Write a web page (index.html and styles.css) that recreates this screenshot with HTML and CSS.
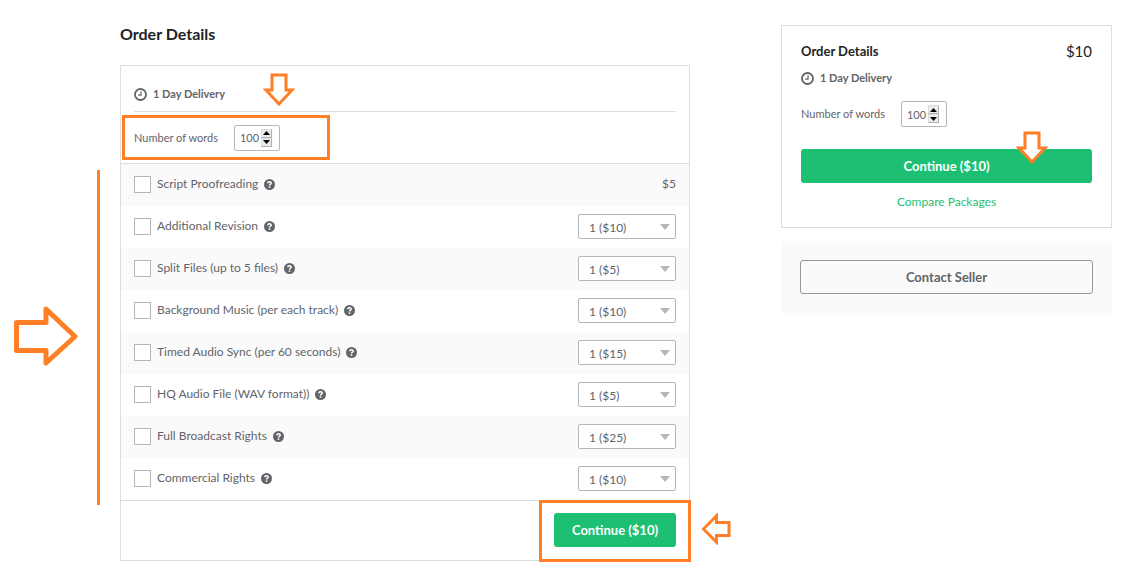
FILE: index.html
```html
<!DOCTYPE html>
<html lang="en">
<head>
  <meta charset="UTF-8">
  <meta name="viewport" content="width=device-width, initial-scale=1">
  <title>Order Details</title>
  <link rel="stylesheet" href="styles.css">
</head>
<body>

<svg width="0" height="0" class="sprite" aria-hidden="true">
  <symbol id="clock" viewBox="0 0 12 12">
    <circle cx="6" cy="6" r="5.1" fill="none" stroke="currentColor" stroke-width="1.7"/>
    <path d="M6.5 3v3.5H3.8" fill="none" stroke="currentColor" stroke-width="1.1"/>
  </symbol>
  <symbol id="help" viewBox="0 0 11 11">
    <circle cx="5.5" cy="5.5" r="5.5" fill="currentColor"/>
    <path d="M3.7 4.2C3.8 2.4 7.2 2.3 7.2 4.2C7.2 5.3 5.5 5.2 5.5 6.6" fill="none" stroke="#fff" stroke-width="1.5"/>
    <rect x="4.7" y="7.3" width="1.6" height="1.5" fill="#fff"/>
  </symbol>
  <symbol id="caret" viewBox="0 0 10 6">
    <path d="M0 0h10L5 6z" fill="currentColor"/>
  </symbol>
  <symbol id="down" viewBox="0 0 32 33">
    <path d="M9 2h14v15h6L16 31L3 17h6z" fill="#fff" stroke="currentColor" stroke-width="3"/>
  </symbol>
</svg>

<div class="page">
  <main class="main">
    <h1>Order Details</h1>

    <form class="card order">
      <div class="order-head">
        <p class="delivery"><svg class="clock"><use href="#clock"/></svg>1 Day Delivery</p>
        <div class="quantity">
          <label for="words">Number of words</label>
          <div class="stepper">
            <input type="number" id="words" value="100">
            <div class="spin">
              <button type="button" aria-label="More words" onclick="words.stepUp()"><svg viewBox="0 0 7 4"><path d="M0 4h7L3.5 0z"/></svg></button>
              <button type="button" aria-label="Fewer words" onclick="words.stepDown()"><svg viewBox="0 0 7 4"><path d="M0 0h7L3.5 4z"/></svg></button>
            </div>
          </div>
        </div>
        <div class="frame frame-quantity"></div>
        <svg class="arrow arrow-quantity"><use href="#down"/></svg>
      </div>

      <ul class="extras">
        <li>
          <input type="checkbox" id="extra1">
          <label for="extra1">Script Proofreading</label>
          <svg class="help"><use href="#help"/></svg>
          <span class="price">$5</span>
        </li>
        <li>
          <input type="checkbox" id="extra2">
          <label for="extra2">Additional Revision</label>
          <svg class="help"><use href="#help"/></svg>
          <div class="select"><select aria-label="Additional Revision quantity"><option>1 ($10)</option></select><svg><use href="#caret"/></svg></div>
        </li>
        <li>
          <input type="checkbox" id="extra3">
          <label for="extra3">Split Files (up to 5 files)</label>
          <svg class="help"><use href="#help"/></svg>
          <div class="select"><select aria-label="Split Files quantity"><option>1 ($5)</option></select><svg><use href="#caret"/></svg></div>
        </li>
        <li>
          <input type="checkbox" id="extra4">
          <label for="extra4">Background Music (per each track)</label>
          <svg class="help"><use href="#help"/></svg>
          <div class="select"><select aria-label="Background Music quantity"><option>1 ($10)</option></select><svg><use href="#caret"/></svg></div>
        </li>
        <li>
          <input type="checkbox" id="extra5">
          <label for="extra5">Timed Audio Sync (per 60 seconds)</label>
          <svg class="help"><use href="#help"/></svg>
          <div class="select"><select aria-label="Timed Audio Sync quantity"><option>1 ($15)</option></select><svg><use href="#caret"/></svg></div>
        </li>
        <li>
          <input type="checkbox" id="extra6">
          <label for="extra6">HQ Audio File (WAV format))</label>
          <svg class="help"><use href="#help"/></svg>
          <div class="select"><select aria-label="HQ Audio File quantity"><option>1 ($5)</option></select><svg><use href="#caret"/></svg></div>
        </li>
        <li>
          <input type="checkbox" id="extra7">
          <label for="extra7">Full Broadcast Rights</label>
          <svg class="help"><use href="#help"/></svg>
          <div class="select"><select aria-label="Full Broadcast Rights quantity"><option>1 ($25)</option></select><svg><use href="#caret"/></svg></div>
        </li>
        <li>
          <input type="checkbox" id="extra8">
          <label for="extra8">Commercial Rights</label>
          <svg class="help"><use href="#help"/></svg>
          <div class="select"><select aria-label="Commercial Rights quantity"><option>1 ($10)</option></select><svg><use href="#caret"/></svg></div>
        </li>
      </ul>

      <div class="order-foot">
        <button type="button" class="btn btn-green">Continue ($10)</button>
        <div class="frame frame-continue"></div>
        <svg class="arrow arrow-continue" viewBox="0 0 30 32">
          <path d="M2.5 16L15.5 2.8v6.7h12.5v13H15.5v6.7z" fill="#fff" stroke="currentColor" stroke-width="3"/>
        </svg>
      </div>

      <div class="bar"></div>
      <svg class="arrow arrow-extras" viewBox="0 0 64 62">
        <path d="M2.5 17.5h29.5V4L61 31.5L32 58V45.5H2.5z" fill="#fff" stroke="currentColor" stroke-width="5" stroke-linejoin="round"/>
      </svg>
    </form>
  </main>

  <aside class="side">
    <section class="card summary">
      <div class="summary-title">
        <h2>Order Details</h2>
        <span class="total">$10</span>
      </div>
      <p class="delivery"><svg class="clock"><use href="#clock"/></svg>1 Day Delivery</p>
      <div class="quantity">
        <label for="words2">Number of words</label>
        <div class="stepper">
          <input type="number" id="words2" value="100">
          <div class="spin">
            <button type="button" aria-label="More words" onclick="words2.stepUp()"><svg viewBox="0 0 7 4"><path d="M0 4h7L3.5 0z"/></svg></button>
            <button type="button" aria-label="Fewer words" onclick="words2.stepDown()"><svg viewBox="0 0 7 4"><path d="M0 0h7L3.5 4z"/></svg></button>
          </div>
        </div>
      </div>
      <button type="button" class="btn btn-green">Continue ($10)</button>
      <a href="#" class="compare">Compare Packages</a>
      <svg class="arrow arrow-summary"><use href="#down"/></svg>
    </section>

    <section class="contact">
      <button type="button" class="btn btn-outline">Contact Seller</button>
    </section>
  </aside>
</div>

</body>
</html>
```

FILE: styles.css
```css
* {
  box-sizing: border-box;
}

body {
  margin: 0;
  font-family: "Lato", "Open Sans", sans-serif;
  font-size: 12px;
  line-height: 20px;
  color: #62646a;
  background-color: #fff;
}

h1, h2, p, ul {
  margin: 0;
  padding: 0;
}

input, select, button {
  margin: 0;
  font-family: inherit;
  color: inherit;
}

.sprite {
  position: absolute;
}

.page {
  display: flex;
  align-items: flex-start;
  gap: 91px;
  padding: 24px 16px 16px 120px;
}

.main {
  flex: 1;
}

.side {
  width: 331px;
  padding-top: 1px;
}

h1 {
  margin-bottom: 21px;
  font-size: 16px;
  color: #222325;
}

h2 {
  font-size: 13px;
  color: #222325;
}

.card {
  position: relative;
  border: 1px solid #dddee0;
}

/* order form */

.order-head {
  position: relative;
  padding: 0 13px;
}

.delivery {
  display: flex;
  align-items: center;
  gap: 6px;
  font-size: 11px;
  font-weight: bold;
}

.order-head .delivery {
  padding: 18px 0 7px;
  border-bottom: 1px solid #dddee0;
}

.clock {
  width: 13px;
  height: 13px;
}

.quantity {
  display: flex;
  align-items: center;
  gap: 16px;
  font-size: 11px;
}

.order-head .quantity {
  height: 51px;
}

.stepper {
  display: flex;
  align-items: center;
  width: 46px;
  height: 26px;
  padding-left: 5px;
  border: 1px solid #b5b6ba;
  border-radius: 2px;
  background-color: #fff;
}

.stepper input {
  width: 21px;
  padding: 0;
  border: none;
  background: none;
  font-size: 11px;
  appearance: textfield;
}

.stepper input::-webkit-inner-spin-button {
  display: none;
}

.spin {
  display: flex;
  flex-direction: column;
  width: 11px;
}

.spin button {
  display: flex;
  align-items: center;
  justify-content: center;
  height: 9px;
  padding: 0;
  border: 1px solid #b0b0b0;
  border-top-color: #ddd;
  border-left-color: #ddd;
  background-color: #ececec;
}

.spin svg {
  width: 7px;
  height: 4px;
  fill: #000;
}

.extras {
  list-style: none;
  border-top: 1px solid #dddee0;
  border-bottom: 1px solid #dddee0;
}

.extras li {
  display: flex;
  align-items: center;
  height: 42px;
  padding: 0 13px 2px;
}

.extras li:nth-child(odd) {
  background-color: #fafafa;
}

.extras input {
  appearance: none;
  width: 17px;
  height: 17px;
  margin-right: 6px;
  border: 1px solid #b5b6ba;
  background-color: #fff;
}

.extras input:checked {
  background-color: #1dbf73;
}

.help {
  width: 11px;
  height: 11px;
  margin-left: 6px;
}

.price, .select {
  margin-left: auto;
}

.select {
  position: relative;
  width: 98px;
  height: 25px;
}

.select select {
  display: block;
  width: 100%;
  height: 100%;
  padding: 2px 10px 0;
  border: 1px solid #b5b6ba;
  border-radius: 2px;
  background-color: #fff;
  font-size: 12px;
  appearance: none;
}

.select svg {
  position: absolute;
  top: 10px;
  right: 6px;
  width: 10px;
  height: 6px;
  color: #b5b6ba;
  pointer-events: none;
}

.order-foot {
  position: relative;
  display: flex;
  justify-content: flex-end;
  padding: 12px 13px 13px;
}

.btn {
  height: 34px;
  padding: 0 18px;
  border: none;
  border-radius: 3px;
  font-size: 13px;
  font-weight: bold;
  cursor: pointer;
}

.btn-green {
  background-color: #1dbf73;
  color: #fff;
}

.btn-outline {
  width: 100%;
  border: 1px solid #95979d;
  background: none;
}

/* sidebar */

.summary {
  display: flex;
  flex-direction: column;
  padding: 15px 19px;
}

.summary-title {
  display: flex;
  align-items: center;
  justify-content: space-between;
}

.total {
  font-size: 15px;
  color: #222325;
}

.summary .delivery {
  padding-top: 7px;
}

.summary .quantity {
  padding: 13px 0 22px;
}

.compare {
  margin-top: 9px;
  color: #1dbf73;
  font-size: 12px;
  text-align: center;
  text-decoration: none;
}

.contact {
  margin-top: 13px;
  padding: 19px;
  background-color: #fafafa;
}

/* orange marks over the form */

.frame {
  position: absolute;
  border: 3px solid #ff7f27;
  pointer-events: none;
}

.frame-quantity {
  top: 49px;
  left: 1px;
  width: 208px;
  height: 45px;
}

.frame-continue {
  top: -1px;
  right: -2px;
  width: 152px;
  height: 62px;
}

.bar {
  position: absolute;
  top: 104px;
  bottom: 55px;
  left: -24px;
  width: 3px;
  background-color: #ff7f27;
}

.arrow {
  position: absolute;
  color: #ff7f27;
  pointer-events: none;
}

.arrow-quantity {
  top: 7px;
  left: 142px;
  width: 32px;
  height: 33px;
}

.arrow-continue {
  top: 12px;
  right: -42px;
  width: 30px;
  height: 32px;
}

.arrow-extras {
  top: 239px;
  left: -107px;
  width: 64px;
  height: 62px;
}

.arrow-summary {
  top: 105px;
  right: 63px;
  width: 32px;
  height: 33px;
}
```
